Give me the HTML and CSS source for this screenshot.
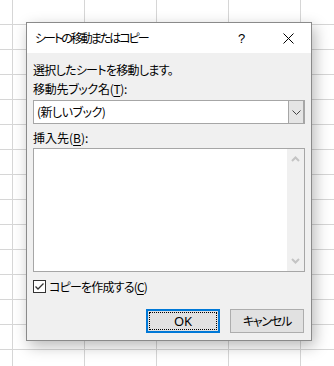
FILE: index.html
```html
<!DOCTYPE html>
<html lang="ja">
<head>
<meta charset="utf-8">
<link rel="stylesheet" href="styles.css">
</head>
<body>
<div class="dialog">
  <div class="titlebar">
    <span class="title">シートの移動またはコピー</span>
    <span class="help">?</span>
    <svg class="close" width="11" height="11" viewBox="0 0 11 11"><path d="M0.5 0.5 L10.5 10.5 M10.5 0.5 L0.5 10.5" stroke="#000" stroke-width="1" fill="none"/></svg>
  </div>
  <div class="body">
    <div class="row r1">選択したシートを移動します。</div>
    <div class="row r2">移動先ブック名(<u>T</u>):</div>
    <div class="combo">
      <span class="combo-text">(新しいブック)</span>
      <span class="combo-btn"><svg width="9" height="5" viewBox="0 0 9 5"><path d="M0.5 0.5 L4.5 4.5 L8.5 0.5" stroke="#444" stroke-width="1" fill="none"/></svg></span>
    </div>
    <div class="row r3">挿入先(<u>B</u>):</div>
    <div class="list">
      <div class="list-area"></div>
      <div class="scroll">
        <svg width="9" height="6" viewBox="0 0 9 6"><path d="M1 5 L4.5 1.5 L8 5" stroke="#c4c4c4" stroke-width="2" fill="none"/></svg>
        <svg width="9" height="6" viewBox="0 0 9 6"><path d="M1 1 L4.5 4.5 L8 1" stroke="#c4c4c4" stroke-width="2" fill="none"/></svg>
      </div>
    </div>
    <div class="row check-row">
      <span class="checkbox"><svg width="11" height="11" viewBox="0 0 11 11"><path d="M1.5 5.5 L4 8 L9.5 2.5" stroke="#333" stroke-width="1.3" fill="none"/></svg></span>
      <span class="check-label">コピーを作成する(<u>C</u>)</span>
    </div>
    <div class="buttons">
      <div class="btn ok"><span class="focus">OK</span></div>
      <div class="btn cancel">キャンセル</div>
    </div>
  </div>
</div>
</body>
</html>
```
FILE: styles.css
```css
html, body {
  margin: 0;
  padding: 0;
}
body {
  width: 334px;
  height: 366px;
  overflow: hidden;
  background-color: #ffffff;
  background-image:
    linear-gradient(to right, #d6d6d6 1px, transparent 1px),
    linear-gradient(to bottom, #d6d6d6 1px, transparent 1px);
  background-size: 72px 100%, 100% 25px;
  background-position: 12px 0, 0 24px;
  padding: 22px 0 0 26px;
  box-sizing: border-box;
  font-family: "Noto Sans CJK JP", "Noto Sans", sans-serif;
  font-size: 12px;
  color: #000;
}
.dialog, .dialog * {
  font-feature-settings: "palt" 1;
}
.dialog {
  width: 286px;
  height: 319px;
  box-sizing: border-box;
  border: 1px solid #8a8a8a;
  background: #f0f0f0;
  box-shadow: 3px 5px 14px rgba(0, 0, 0, 0.28);
  display: flex;
  flex-direction: column;
}
.titlebar {
  height: 30px;
  background: #fff;
  display: flex;
  align-items: center;
  padding-left: 8px;
}
.title {
  flex: 1;
  line-height: 30px;
  letter-spacing: -2px;
}
.help {
  font-family: "Liberation Sans", sans-serif;
  font-size: 13px;
  width: 10px;
  margin-right: 35px;
}
.close {
  margin-right: 17px;
}
.body {
  flex: 1;
  padding: 7px 6px 0 6px;
  display: flex;
  flex-direction: column;
}
.row {
  height: 19px;
  line-height: 19px;
  white-space: nowrap;
}
.r1 {
  letter-spacing: -0.7px;
}
.r2 {
  letter-spacing: -0.3px;
}
u {
  text-decoration-thickness: 1px;
  text-underline-offset: 2px;
}
.combo {
  margin-top: 2px;
  height: 24px;
  box-sizing: border-box;
  border: 1px solid #a6a6a6;
  background: #fff;
  display: flex;
}
.combo-text {
  flex: 1;
  line-height: 22px;
  padding-left: 3px;
  letter-spacing: -0.5px;
}
.combo-btn {
  width: 17px;
  box-sizing: border-box;
  border: 1px solid #a6a6a6;
  border-right-width: 2px;
  margin: -1px -1px -1px 0;
  background: #e5e5e5;
  display: flex;
  align-items: center;
  justify-content: center;
}
.r3 {
  margin-top: 4px;
}
.list {
  margin-top: 1px;
  height: 124px;
  box-sizing: border-box;
  border: 1px solid #a6a6a6;
  background: #fff;
  display: flex;
}
.list-area {
  flex: 1;
}
.scroll {
  width: 17px;
  background: #f0f0f0;
  display: flex;
  flex-direction: column;
  align-items: center;
  justify-content: space-between;
  padding: 7px 0 7px;
}
.check-row {
  margin-top: 5px;
  display: flex;
  align-items: center;
  gap: 3px;
}
.check-label {
  letter-spacing: -0.8px;
}
.checkbox {
  width: 13px;
  height: 13px;
  box-sizing: border-box;
  border: 1px solid #333;
  background: #fff;
  display: flex;
  align-items: center;
  justify-content: center;
}
.buttons {
  margin-top: 13px;
  display: flex;
  justify-content: flex-end;
  gap: 10px;
  padding-right: 1px;
}
.btn {
  width: 74px;
  height: 24px;
  box-sizing: border-box;
  border: 1px solid #adadad;
  background: #e1e1e1;
  display: flex;
  align-items: center;
  justify-content: center;
  line-height: 20px;
}
.cancel {
  letter-spacing: -1.2px;
}
.btn.ok {
  border: 2px solid #0078d7;
  padding: 1px;
  font-family: "Noto Sans", sans-serif;
  font-size: 13px;
}
.focus {
  flex: 1;
  align-self: stretch;
  display: flex;
  align-items: center;
  justify-content: center;
  outline: 1px dotted #000;
  outline-offset: -1px;
}
```
